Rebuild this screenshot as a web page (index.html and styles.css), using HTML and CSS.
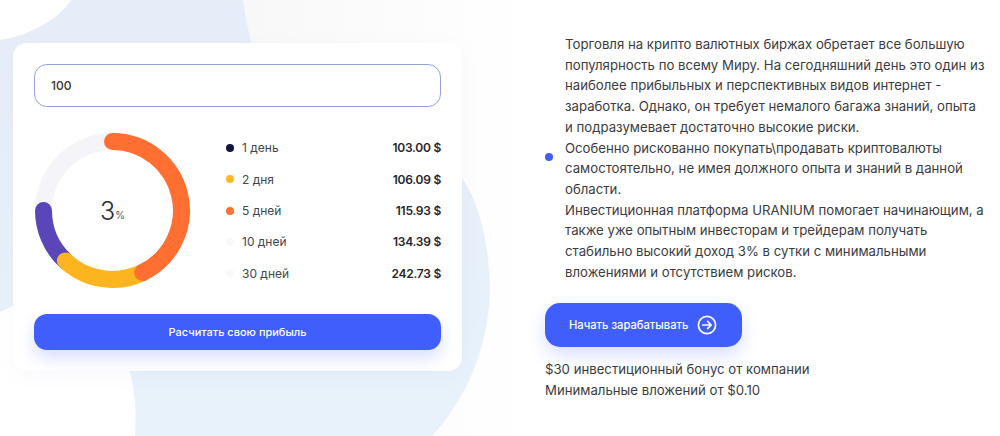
FILE: index.html
```html
<!DOCTYPE html>
<html lang="ru" dir="ltr">
  <head>
    <meta charset="UTF-8">
    <meta name="viewport" content="width=device-width, initial-scale=1.0">
    <title>Калькулятор прибыли</title>
    <link rel="stylesheet" href="styles.css">
  </head>
  <body>
    <svg class="backdrop" width="1000" height="436" viewBox="0 0 1000 436" aria-hidden="true">
      <defs>
        <linearGradient id="pale" x1="0" y1="0" x2="1" y2="0">
          <stop offset="0" stop-color="#f8f8f9"/>
          <stop offset="1" stop-color="#fff"/>
        </linearGradient>
        <linearGradient id="sky" x1="0" y1="0" x2="0" y2="1">
          <stop offset="0" stop-color="#e7edf8"/>
          <stop offset="1" stop-color="#e8f2fb"/>
        </linearGradient>
      </defs>
      <rect class="blob-pale" x="240" y="0" width="290" height="436"/>
      <path class="blob" d="M71 0C58 20 28 36 0 40V312C14 306 28 296 40 290L130 372C136 395 136 415 135 436H432C470 395 490 340 490 285C488 240 480 205 462 178L300 60H256C250 40 246 20 243 0Z"/>
    </svg>
    <main class="page">
      <section class="card">
        <input class="amount" type="text" value="100">
        <div class="stats">
          <div class="donut">
            <svg width="155" height="155" viewBox="0 0 155 155">
              <g fill="none" stroke-width="17" stroke-linecap="round">
                <circle cx="77.5" cy="77.5" r="69" stroke="#f4f4f9"/>
                <path d="M8.5 77.5A69 69 0 0 0 30.4 127.9" stroke="#5a46b8"/>
                <path d="M30.4 127.9A69 69 0 0 0 107.7 139.5" stroke="#fdb51f"/>
                <path d="M77.5 8.5A69 69 0 0 1 107.7 139.5" stroke="#ff6f32"/>
              </g>
            </svg>
            <div class="donut-label">3<small>%</small></div>
          </div>
          <ul class="legend">
            <li><i class="dot dot-navy"></i><span class="term">1 день</span><b>103.00 $</b></li>
            <li><i class="dot dot-yellow"></i><span class="term">2 дня</span><b>106.09 $</b></li>
            <li><i class="dot dot-orange"></i><span class="term">5 дней</span><b>115.93 $</b></li>
            <li><i class="dot dot-pale"></i><span class="term">10 дней</span><b>134.39 $</b></li>
            <li><i class="dot dot-pale"></i><span class="term">30 дней</span><b>242.73 $</b></li>
          </ul>
        </div>
        <button class="calc" type="button">Расчитать свою прибыль</button>
      </section>
      <section class="about">
        <div class="intro">
          <i class="marker"></i>
          <p>
            Торговля на крипто валютных биржах обретает все большую<br>
            популярность по всему Миру. На сегодняшний день это один из<br>
            наиболее прибыльных и перспективных видов интернет -<br>
            заработка. Однако, он требует немалого багажа знаний, опыта<br>
            и подразумевает достаточно высокие риски.<br>
            Особенно рискованно покупать\продавать криптовалюты<br>
            самостоятельно, не имея должного опыта и знаний в данной<br>
            области.<br>
            Инвестиционная платформа URANIUM помогает начинающим, а<br>
            также уже опытным инвесторам и трейдерам получать<br>
            стабильно высокий доход 3% в сутки с минимальными<br>
            вложениями и отсутствием рисков.
          </p>
        </div>
        <a class="start" href="#">
          Начать зарабатывать
          <svg width="20" height="20" viewBox="0 0 20 20" fill="none" stroke="#fff" stroke-width="1.7" stroke-linecap="round" stroke-linejoin="round">
            <circle cx="10" cy="10" r="8.6"/>
            <path d="M5.8 10H14M10.6 6.4L14.2 10L10.6 13.6"/>
          </svg>
        </a>
        <p class="bonus">$30 инвестиционный бонус от компании<br>Минимальные вложений от $0.10</p>
      </section>
    </main>
  </body>
</html>
```

FILE: styles.css
```css
* {
  box-sizing: border-box;
}
html, body {
  margin: 0;
  height: 436px;
  overflow: hidden;
}
body {
  position: relative;
  background: #fff;
  color: #3b3b43;
  font-family: "Inter", "Noto Sans", sans-serif;
}
.backdrop {
  position: absolute;
  top: 0;
  left: 0;
}
.blob {
  fill: url(#sky);
}
.blob-pale {
  fill: url(#pale);
}
.page {
  position: relative;
  display: flex;
  align-items: flex-start;
}

/* calculator */
.card {
  width: 449px;
  height: 328px;
  margin: 43px 0 0 13px;
  padding: 21px;
  background: #fff;
  border-radius: 14px;
  box-shadow: 0 4px 18px rgba(120, 140, 200, 0.05);
}
.amount {
  display: block;
  width: 100%;
  height: 43px;
  padding: 0 16px;
  border: 1.5px solid #93a3d8;
  border-radius: 13px;
  background: #fff;
  color: #33332c;
  font: 500 12px "Inter", sans-serif;
  outline: none;
}
.stats {
  display: flex;
  align-items: center;
  margin-top: 26px;
  padding-left: 1px;
}
.donut {
  position: relative;
  flex: none;
  width: 155px;
  height: 155px;
}
.donut svg {
  display: block;
}
.donut-label {
  position: absolute;
  top: 0;
  left: 0;
  width: 100%;
  height: 100%;
  display: flex;
  align-items: center;
  justify-content: center;
  font-size: 25px;
  font-weight: 300;
  color: #2a2a30;
}
.donut-label small {
  margin-top: 9px;
  font-size: 10px;
  font-weight: 400;
  color: #555;
}
.legend {
  flex: 1;
  margin: 0 0 0 36px;
  padding: 0;
  list-style: none;
  display: flex;
  flex-direction: column;
  gap: 11.3px;
}
.legend li {
  display: flex;
  align-items: center;
  height: 20px;
  font-size: 12px;
}
.term {
  flex: 1;
  color: #44444c;
}
.legend b {
  font-weight: 600;
  letter-spacing: -0.25px;
  color: #26262c;
}
.dot {
  width: 8px;
  height: 8px;
  margin-right: 8px;
  border-radius: 50%;
}
.dot-navy { background: #14123f; }
.dot-yellow { background: #fdb927; }
.dot-orange { background: #ff7233; }
.dot-pale { background: #f9f9fc; }
.calc {
  display: block;
  width: 100%;
  height: 36px;
  margin-top: 26px;
  border: 0;
  border-radius: 13px;
  background: #3f5efb;
  color: #fff;
  font: 500 11px "Inter", sans-serif;
  box-shadow: 0 8px 16px rgba(63, 94, 251, 0.2);
}

/* text column */
.about {
  margin: 34px 0 0 83px;
}
.intro {
  display: flex;
  align-items: center;
}
.marker {
  flex: none;
  width: 8px;
  height: 8px;
  margin: 0 12px 2px 0;
  border-radius: 50%;
  background: #3f5efb;
}
.intro p {
  margin: 0;
  font-size: 13.2px;
  line-height: 20.7px;
  white-space: nowrap;
}
.start {
  display: inline-flex;
  align-items: center;
  gap: 9px;
  height: 44px;
  margin-top: 21px;
  padding: 0 25px 0 24px;
  border-radius: 15px;
  background: #3f5efb;
  color: #fff;
  font-size: 11.2px;
  font-weight: 500;
  text-decoration: none;
  box-shadow: 0 8px 18px rgba(63, 94, 251, 0.2);
}
.bonus {
  margin: 12px 0 0;
  font-size: 13.2px;
  line-height: 21px;
  white-space: nowrap;
}
```
